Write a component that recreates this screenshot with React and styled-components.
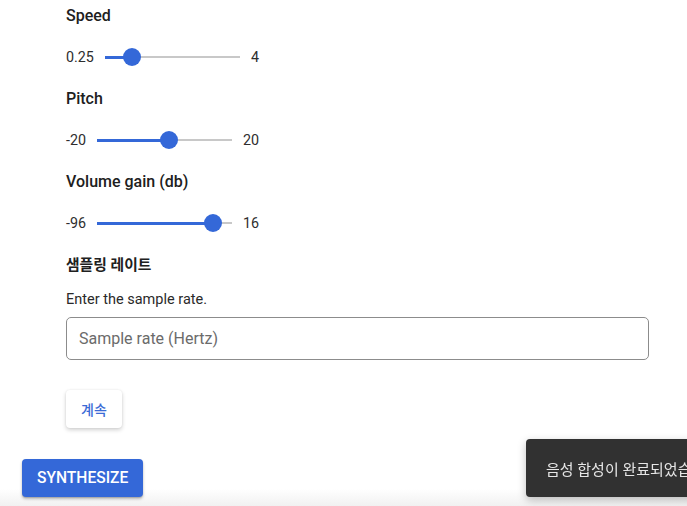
import React from "react";
import styled, { createGlobalStyle } from "styled-components";

const Global = createGlobalStyle`
  html, body {
    margin: 0;
    padding: 0;
  }
  body {
    width: 687px;
    height: 506px;
    overflow: hidden;
    background: linear-gradient(to bottom, #ffffff 0px, #ffffff 489px, #f1f1f1 506px);
    font-family: Roboto, "Noto Sans CJK KR", sans-serif;
    color: rgba(0, 0, 0, 0.87);
  }
`;

const Page = styled.div`
  padding: 6px 0 0 22px;
  display: flex;
  flex-direction: column;
  align-items: flex-start;
`;

const Form = styled.div`
  margin-left: 44px;
  display: flex;
  flex-direction: column;
  align-items: flex-start;
`;

const Label = styled.div`
  font-size: ${(p) => (p.$korean ? "14.8px" : "16px")};
  font-weight: ${(p) => (p.$korean ? 700 : 500)};
  line-height: 20px;
  color: #202020;
  font-family: Roboto, "Noto Sans CJK KR", sans-serif;
`;

const SliderRow = styled.div`
  display: flex;
  align-items: center;
  gap: 11px;
  height: 36px;
  margin: 13px 0 14px;
  font-size: 14.3px;
  color: #2e2e2e;
`;

const Track = styled.div`
  position: relative;
  width: 135px;
  height: 2px;
  background: #c8c8c8;
`;

const Fill = styled.div`
  position: absolute;
  left: 0;
  top: -0.5px;
  height: 3px;
  background: #3468d8;
`;

const Thumb = styled.div`
  position: absolute;
  top: 50%;
  width: 18px;
  height: 18px;
  margin: -9px 0 0 -9px;
  border-radius: 50%;
  background: #3468d8;
`;

const Hint = styled.div`
  margin-top: 15px;
  font-size: 14.5px;
  line-height: 20px;
  color: #2a2a2a;
`;

const Input = styled.input`
  margin-top: 7px;
  box-sizing: border-box;
  width: 583px;
  height: 43px;
  padding: 0 12px;
  border: 1px solid #8c8c8c;
  border-radius: 5px;
  font-family: Roboto, sans-serif;
  font-size: 16px;
  color: #333;
  outline: none;
  background: transparent;
  &::placeholder {
    color: #6b6b6b;
  }
`;

const Button = styled.button`
  box-sizing: border-box;
  height: 38px;
  padding: 0 15px;
  border: none;
  border-radius: 4px;
  font-family: Roboto, "Noto Sans CJK KR", sans-serif;
  font-size: ${(p) => (p.$primary ? "15.6px" : "14px")};
  font-weight: 500;
  cursor: pointer;
  background: ${(p) => (p.$primary ? "#3468d8" : "#ffffff")};
  color: ${(p) => (p.$primary ? "#ffffff" : "#3b6bd6")};
  box-shadow: ${(p) =>
    p.$primary
      ? "0 2px 3px rgba(0,0,0,0.25), 0 1px 1px rgba(0,0,0,0.12)"
      : "0 2px 4px rgba(0,0,0,0.18), 0 0 2px rgba(0,0,0,0.08)"};
  margin-top: ${(p) => p.$mt}px;
`;

const Snackbar = styled.div`
  position: fixed;
  left: 526px;
  top: 439px;
  width: 320px;
  height: 58px;
  box-sizing: border-box;
  padding-left: 20px;
  display: flex;
  align-items: center;
  background: #313131;
  border-radius: 4px;
  box-shadow: 0 3px 8px rgba(0, 0, 0, 0.25);
  color: #e6e6e6;
  font-size: 15px;
  white-space: nowrap;
  font-family: Roboto, "Noto Sans CJK KR", sans-serif;
`;

const sliders = [
  { label: "Speed", min: "0.25", max: "4", frac: 0.198 },
  { label: "Pitch", min: "-20", max: "20", frac: 0.535 },
  { label: "Volume gain (db)", min: "-96", max: "16", frac: 0.862 },
];

function Slider({ label, min, max, frac }) {
  const px = Math.round(frac * 135);
  return (
    <>
      <Label>{label}</Label>
      <SliderRow>
        <span>{min}</span>
        <Track>
          <Fill style={{ width: px }} />
          <Thumb style={{ left: px }} />
        </Track>
        <span>{max}</span>
      </SliderRow>
    </>
  );
}

export default function App() {
  return (
    <>
      <Global />
      <Page>
        <Form>
          {sliders.map((s) => (
            <Slider key={s.label} {...s} />
          ))}
          <Label $korean>샘플링 레이트</Label>
          <Hint>Enter the sample rate.</Hint>
          <Input placeholder="Sample rate (Hertz)" />
          <Button $mt={30}>계속</Button>
        </Form>
        <Button $primary $mt={31}>SYNTHESIZE</Button>
      </Page>
      <Snackbar>음성 합성이 완료되었습니다</Snackbar>
    </>
  );
}
